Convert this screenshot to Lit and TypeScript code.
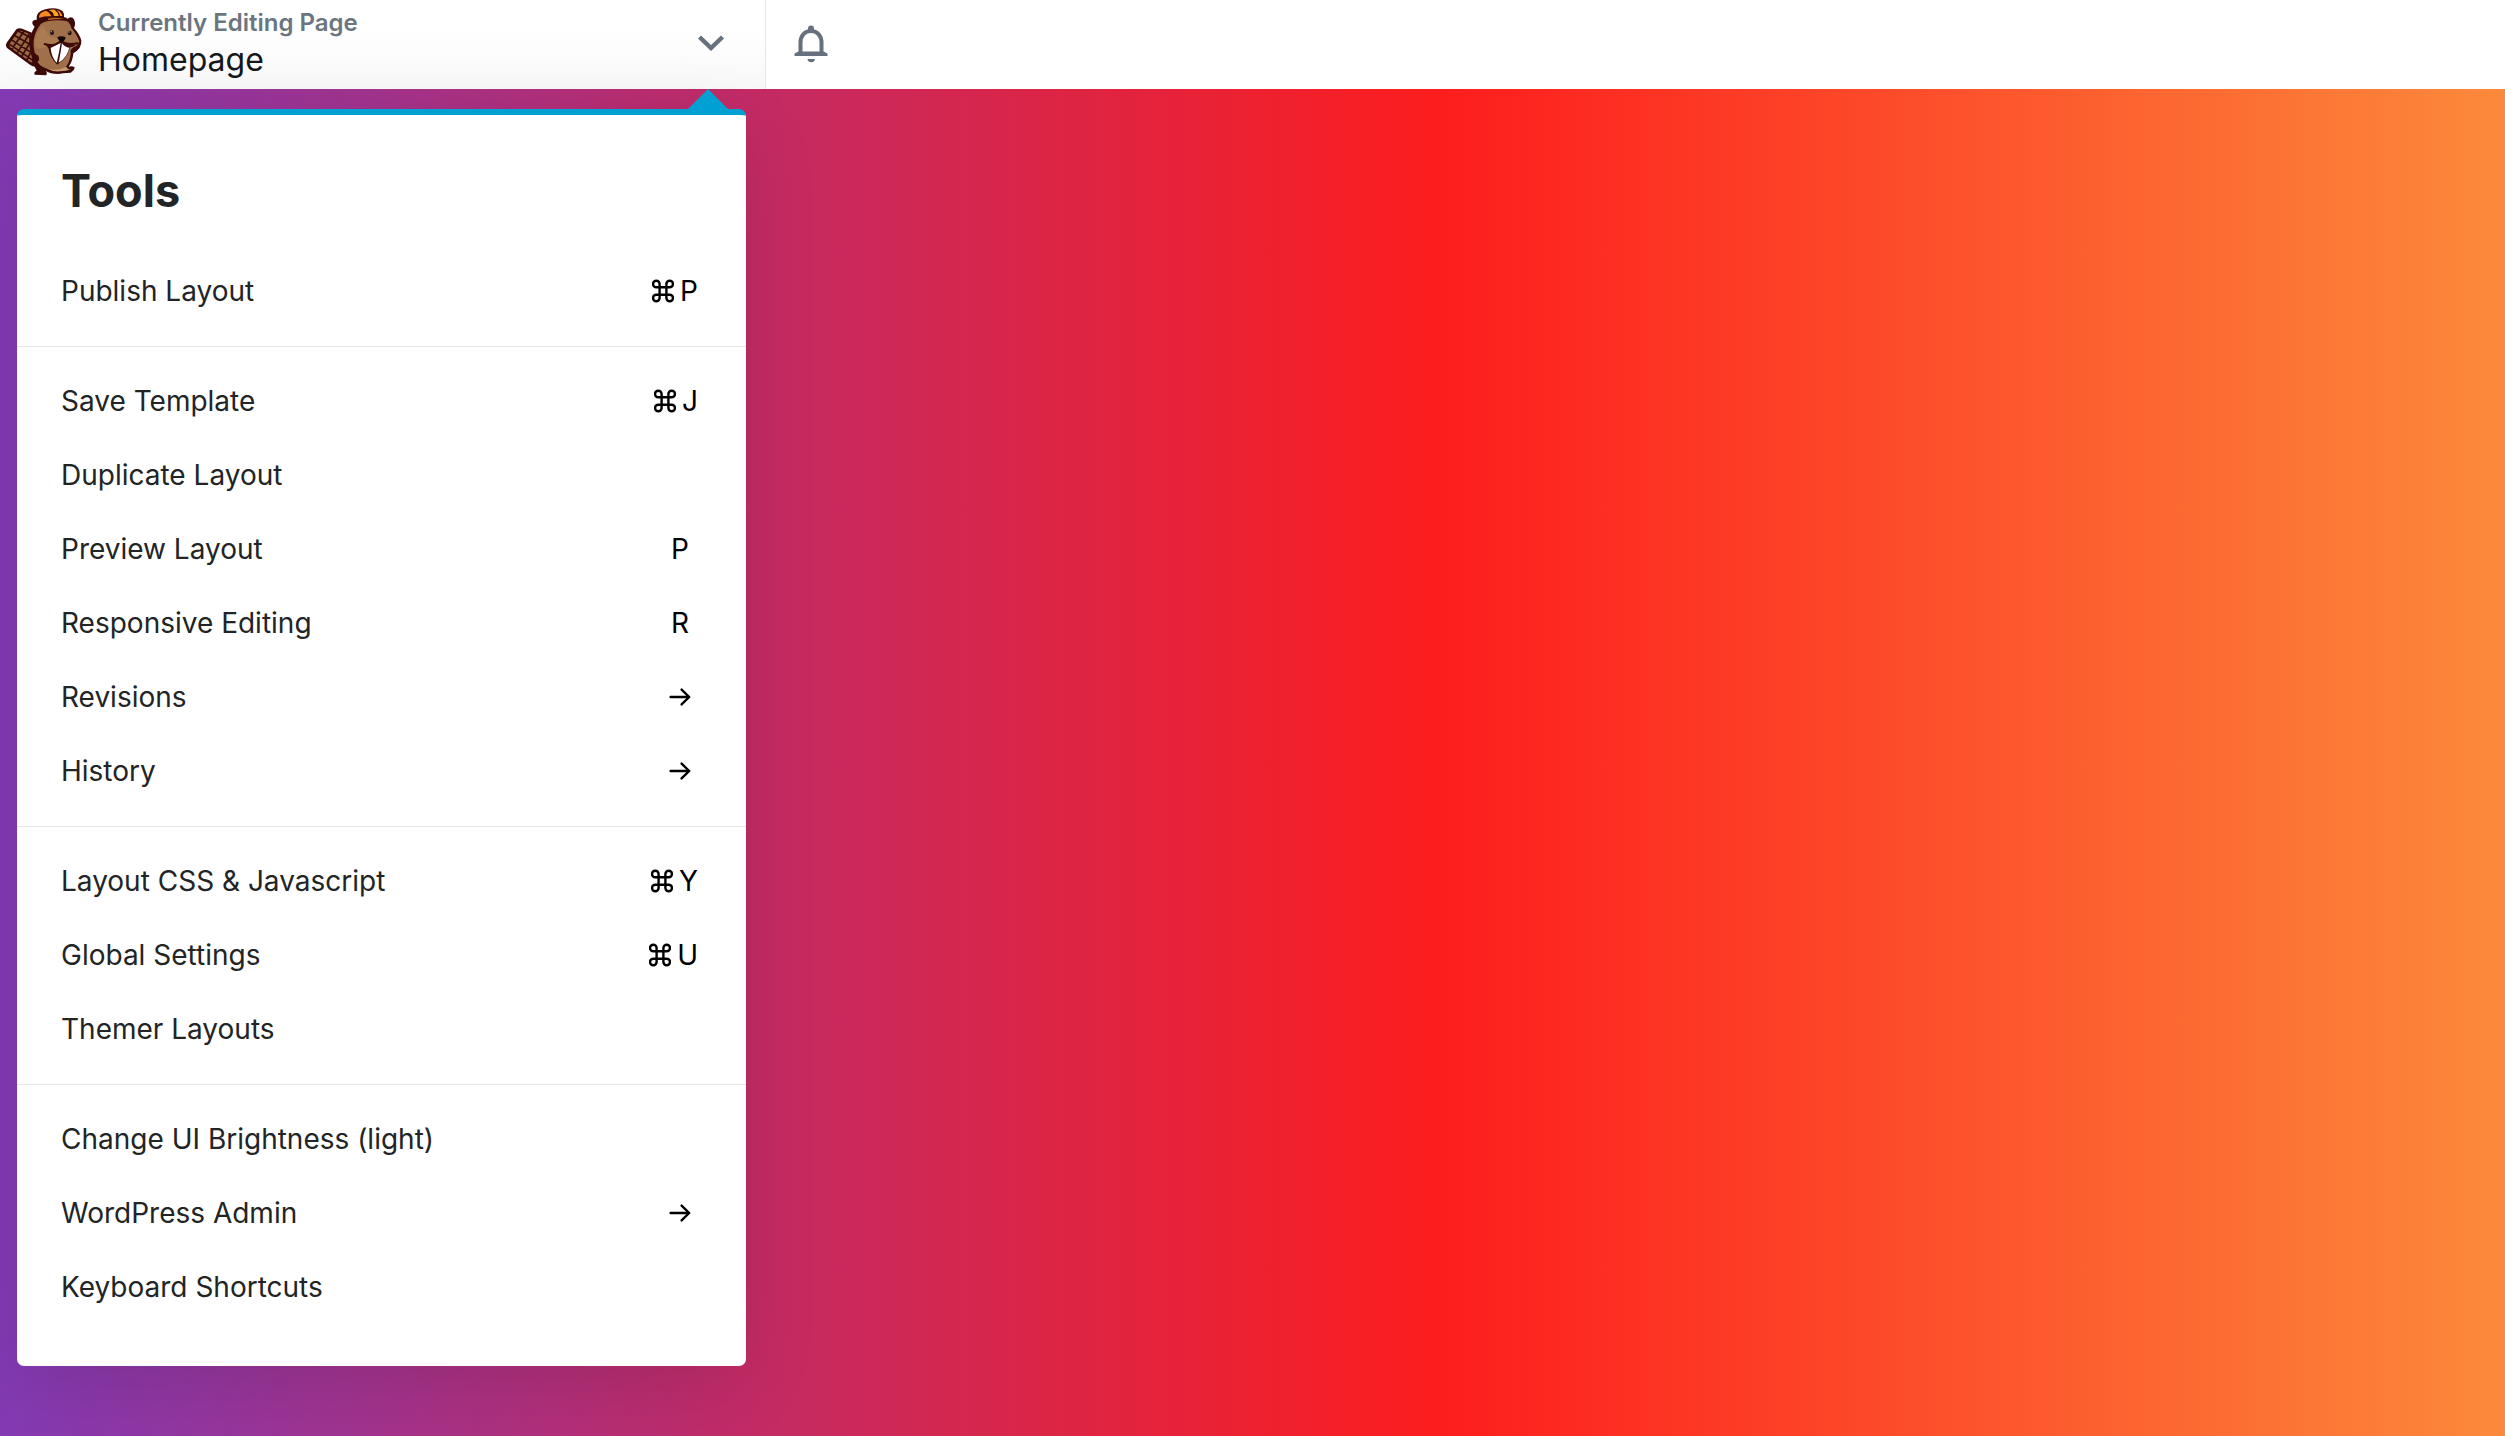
import { LitElement, html, css, svg } from "lit";
import { customElement, property } from "lit/decorators.js";

interface ToolItem {
  label: string;
  keys?: string;
}

const SECTIONS: ToolItem[][] = [
  [{ label: "Publish Layout", keys: "⌘P" }],
  [
    { label: "Save Template", keys: "⌘J" },
    { label: "Duplicate Layout" },
    { label: "Preview Layout", keys: "P" },
    { label: "Responsive Editing", keys: "R" },
    { label: "Revisions", keys: "→" },
    { label: "History", keys: "→" },
  ],
  [
    { label: "Layout CSS & Javascript", keys: "⌘Y" },
    { label: "Global Settings", keys: "⌘U" },
    { label: "Themer Layouts" },
  ],
  [
    { label: "Change UI Brightness (light)" },
    { label: "WordPress Admin", keys: "→" },
    { label: "Keyboard Shortcuts" },
  ],
];

const beaver = svg`
  <g stroke-linejoin="round" stroke-linecap="round">
    <path d="M49 88 Q58 82 70 88 L96 98 Q86 140 102 176 L116 196 Q104 204 90 194 L24 146 Q14 138 20 128 Z" fill="#3d0a0a"/>
    <path d="M54 95 Q60 90 68 94 L90 103 Q84 140 96 172 L102 186 Q96 190 88 184 L32 143 Q26 138 30 130 Z" fill="#9a6a42"/>
    <path d="M46 108 L92 134 M38 122 L94 158 M30 134 L100 182 M56 94 L90 112 M72 94 L36 146 M88 102 L52 158 M90 128 L66 168 M94 154 L80 180" fill="none" stroke="#3d0a0a" stroke-width="5"/>
    <path d="M118 66 Q106 54 98 64 Q94 72 104 80 Q88 104 90 140 Q92 160 98 174 Q92 184 104 200 L110 212 Q100 216 104 224 L138 226 Q144 218 136 212 Q160 226 190 220 L212 218 Q224 210 224 202 Q216 196 206 200 Q218 184 220 160 Q246 144 244 122 Q240 104 222 84 Q228 72 222 58 Q214 46 202 56 Q180 48 160 50 Q134 52 118 66 Z" fill="#3d0a0a"/>
    <path d="M122 72 Q150 54 188 60 Q210 62 214 84 Q232 106 238 124 Q234 138 220 142 L212 150 Q214 176 200 198 Q186 212 160 212 Q126 206 112 186 Q122 180 114 168 L104 158 Q94 118 112 88 Z" fill="#9f704a"/>
    <path d="M128 74 Q106 100 104 130 Q110 152 128 144 Q156 134 180 122 L184 112 Q150 118 142 100 Q134 82 128 74 Z" fill="#aa7a50"/>
    <path d="M144 206 Q172 214 198 200 Q202 208 212 208 Q200 214 180 214 Q158 216 144 206 Z" fill="#c79b6c"/>
    <path d="M92 110 Q88 146 102 170 Q96 178 106 180 Q116 178 112 168" fill="none" stroke="#3d0a0a" stroke-width="6"/>
    <path d="M138 134 Q160 140 182 122 Q198 136 228 134 Q222 140 210 142 Q202 176 172 194 Q150 174 146 146 Z" fill="#3d0a0a"/>
    <path d="M182 128 L152 144 Q154 172 170 188 Q176 164 182 128 Z" fill="#fff"/>
    <path d="M186 130 Q194 142 208 143 Q202 172 176 188 Q182 158 186 130 Z" fill="#fff"/>
    <path d="M134 132 Q160 142 184 122 Q198 136 232 130" fill="none" stroke="#3d0a0a" stroke-width="6"/>
    <path d="M172 112 Q184 106 197 112 Q196 122 185 126 Q174 122 172 112 Z" fill="#120507"/>
    <ellipse cx="156" cy="98" rx="6" ry="7" fill="#241415"/>
    <ellipse cx="209" cy="99" rx="6" ry="7" fill="#241415"/>
    <circle cx="154" cy="95" r="2" fill="#d7b08c"/>
    <circle cx="207" cy="96" r="2" fill="#d7b08c"/>
    <path d="M110 58 Q108 34 136 28 Q170 20 188 34 Q194 42 192 52 Q206 52 198 62 Q160 58 126 66 Q108 70 110 58 Z" fill="#3d0a0a"/>
    <path d="M117 50 Q118 36 138 32 Q152 40 154 49 Q134 48 118 53 Z" fill="#f68b1f"/>
    <path d="M146 31 Q160 34 162 48 L176 48 Q174 36 164 29 Q154 28 146 31 Z" fill="#fba51f"/>
    <path d="M170 30 Q184 34 187 48 L180 48 Q178 36 170 30 Z" fill="#f68b1f"/>
    <path d="M144 56 Q166 50 192 57 Q166 56 144 60 Z" fill="#c4651c"/>
  </g>
`;

@customElement("tool-row")
export class ToolRow extends LitElement {
  @property() label = "";
  @property() keys = "";

  static styles = css`
    :host {
      display: block;
    }
    .row {
      display: flex;
      align-items: center;
      justify-content: space-between;
      width: 100%;
      height: 74px;
      padding: 0 48px 0 44px;
      border: 0;
      background: none;
      color: #222426;
      font: 400 28px/36px Inter, "Liberation Sans", sans-serif;
      text-align: left;
      cursor: pointer;
    }
    .row:hover {
      background: #f4f6f8;
    }
    .keys {
      display: flex;
      justify-content: center;
      gap: 6px;
      min-width: 36px;
      font: inherit;
      color: #000;
    }
    .glyph {
      width: 22px;
      height: 36px;
      fill: none;
      stroke: currentColor;
      stroke-width: 2.4;
      stroke-linecap: round;
      stroke-linejoin: round;
    }
  `;

  private renderKey(key: string) {
    if (key === "⌘") {
      return html`<svg class="glyph" viewBox="0 0 22 36" role="img" aria-label="Command">
        <path
          d="M7.6 11v14a3.3 3.3 0 1 1-3.3-3.3h13.4a3.3 3.3 0 1 1-3.3 3.3V11a3.3 3.3 0 1 1 3.3 3.3H4.3a3.3 3.3 0 1 1 3.3-3.3Z"
        />
      </svg>`;
    }
    if (key === "→") {
      return html`<svg class="glyph" viewBox="0 0 22 36" role="img" aria-label="Opens submenu">
        <path d="M1.6 18h18.6M12.6 10.6l7.6 7.4-7.6 7.4" />
      </svg>`;
    }
    return html`<span>${key}</span>`;
  }

  render() {
    return html`<button class="row" type="button">
      <span>${this.label}</span>
      ${this.keys
        ? html`<kbd class="keys">${[...this.keys].map((k) => this.renderKey(k))}</kbd>`
        : null}
    </button>`;
  }
}

@customElement("app-root")
export class AppRoot extends LitElement {
  static styles = css`
    :host {
      display: flex;
      flex-direction: column;
      min-height: 100vh;
      font-family: Inter, "Liberation Sans", sans-serif;
      background: linear-gradient(90deg, #833ab4 0%, #fd1d1d 50%, #fcb045 100%) 0 0 / 115% 100%
        no-repeat;
    }
    .bar {
      display: flex;
      height: 89px;
      background: #fff;
    }
    .title {
      display: flex;
      align-items: center;
      width: 766px;
      padding: 0 40px 0 0;
      border: 0;
      border-right: 1px solid #e3e6ea;
      background: linear-gradient(#fff 35%, #f8f8f8);
      font: inherit;
      text-align: left;
      cursor: pointer;
      box-sizing: border-box;
    }
    .logo {
      width: 98px;
      height: 89px;
      flex: none;
    }
    .names {
      display: flex;
      flex: 1;
      flex-direction: column;
      padding-bottom: 6px;
    }
    .status {
      color: #6b7580;
      font-size: 24px;
      font-weight: 600;
      line-height: 36px;
    }
    .page {
      color: #15191d;
      font-size: 32px;
      line-height: 38px;
    }
    .chevron {
      width: 28px;
      height: 16px;
      margin-bottom: 4px;
      fill: none;
      stroke: #67717d;
      stroke-width: 4.4;
    }
    .notices {
      width: 90px;
      padding: 0 0 2px;
      border: 0;
      background: none;
      cursor: pointer;
    }
    .bell {
      display: block;
      width: 34px;
      height: 38px;
      margin: 0 auto;
    }
    .panel {
      position: relative;
      width: 729px;
      margin: 20px 17px 70px;
      padding-bottom: 24px;
      border-top: 6px solid #00a0d2;
      border-radius: 7px;
      background: #fff;
      box-sizing: border-box;
      box-shadow: 0 20px 80px -6px rgba(0, 0, 0, 0.13);
    }
    .pointer {
      position: absolute;
      top: -26px;
      right: 18px;
      width: 40px;
      height: 20px;
      background: #00a0d2;
      clip-path: polygon(50% 0, 100% 100%, 0 100%);
    }
    .heading {
      margin: 0;
      padding: 46px 44px 28px;
      color: #222426;
      font-size: 45px;
      font-weight: 700;
      line-height: 60px;
    }
    .section {
      padding: 17px 0 18px;
      border-bottom: 1px solid #e3e6ea;
    }
    .section:first-of-type {
      padding-top: 5px;
    }
    .section:last-of-type {
      border-bottom: 0;
    }
  `;

  render() {
    return html`
      <header class="bar">
        <button class="title" type="button" aria-expanded="true">
          <svg class="logo" viewBox="0 0 294 267" aria-hidden="true">${beaver}</svg>
          <span class="names">
            <span class="status">Currently Editing Page</span>
            <span class="page">Homepage</span>
          </span>
          <svg class="chevron" viewBox="0 0 28 16" aria-hidden="true">
            <path d="M2.5 2l11.5 11 11.5-11" />
          </svg>
        </button>
        <button class="notices" type="button" aria-label="Notifications">
          <svg class="bell" viewBox="0 0 34 38" aria-hidden="true">
            <path
              d="M6.5 28V17.5C6.5 10.5 11 6 17 6s10.5 4.5 10.5 11.5V28"
              fill="none"
              stroke="#67717d"
              stroke-width="4"
            />
            <path
              d="M14 5V3.5a3 3 0 0 1 6 0V5ZM.5 31v-2.500L4.5 26.500h25l4 2V31ZM13.500 34h7.500a3.800 3.800 0 0 1-7.500 0Z"
              fill="#67717d"
            />
          </svg>
        </button>
      </header>
      <main>
        <nav class="panel" aria-label="Tools">
          <span class="pointer"></span>
          <h1 class="heading">Tools</h1>
          ${SECTIONS.map(
            (items) => html`<div class="section">
              ${items.map(
                (item) =>
                  html`<tool-row .label=${item.label} .keys=${item.keys ?? ""}></tool-row>`
              )}
            </div>`
          )}
        </nav>
      </main>
    `;
  }
}
